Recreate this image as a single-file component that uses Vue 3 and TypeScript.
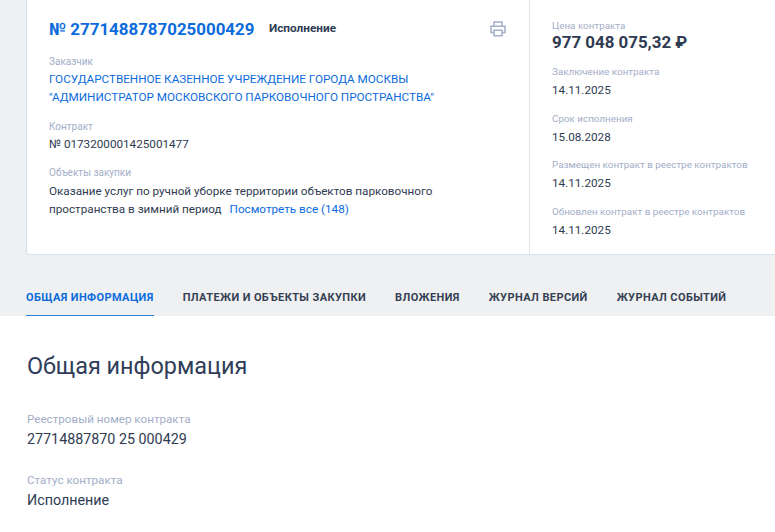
<script setup lang="ts">
const tabs: string[] = ['ОБЩАЯ ИНФОРМАЦИЯ', 'ПЛАТЕЖИ И ОБЪЕКТЫ ЗАКУПКИ', 'ВЛОЖЕНИЯ', 'ЖУРНАЛ ВЕРСИЙ', 'ЖУРНАЛ СОБЫТИЙ']
const sideItems = [
  { label: 'Заключение контракта', value: '14.11.2025' },
  { label: 'Срок исполнения', value: '15.08.2028' },
  { label: 'Размещен контракт в реестре контрактов', value: '14.11.2025' },
  { label: 'Обновлен контракт в реестре контрактов', value: '14.11.2025' },
]
</script>

<template>
  <div class="page">
    <section class="top">
      <div class="card">
        <div class="main">
          <div class="head">
            <a class="number">№ 2771488787025000429</a>
            <span class="status">Исполнение</span>
            <svg class="print" width="16" height="16" viewBox="0 0 16 16" fill="none" stroke="#a3afc9" stroke-width="1.5">
              <path d="M4 5V1h8v4" />
              <path d="M4 11.5H1V5.2h14v6.3h-3" />
              <path d="M4 9.2h8v5.6H4z" />
            </svg>
          </div>
          <div class="label cust">Заказчик</div>
          <a class="link-text">ГОСУДАРСТВЕННОЕ КАЗЕННОЕ УЧРЕЖДЕНИЕ ГОРОДА МОСКВЫ<br />"АДМИНИСТРАТОР МОСКОВСКОГО ПАРКОВОЧНОГО ПРОСТРАНСТВА"</a>
          <div class="label contract">Контракт</div>
          <div class="text contract-val">№ 0173200001425001477</div>
          <div class="label objects">Объекты закупки</div>
          <div class="text objects-val">Оказание услуг по ручной уборке территории объектов парковочного<br />пространства в зимний период <a class="more">Посмотреть все (148)</a></div>
        </div>
        <aside class="side">
          <div class="label">Цена контракта</div>
          <div class="price">977 048 075,32 ₽</div>
          <div v-for="item in sideItems" :key="item.label" class="side-item">
            <div class="label">{{ item.label }}</div>
            <div class="text side-val">{{ item.value }}</div>
          </div>
        </aside>
      </div>
      <nav class="tabs">
        <span v-for="(tab, i) in tabs" :key="tab" class="tab" :class="{ active: i === 0 }">{{ tab }}</span>
      </nav>
    </section>
    <section class="content">
      <h2 class="title">Общая информация</h2>
      <div class="field">
        <div class="f-label">Реестровый номер контракта</div>
        <div class="f-val">27714887870 25 000429</div>
      </div>
      <div class="field">
        <div class="f-label">Статус контракта</div>
        <div class="f-val">Исполнение</div>
      </div>
    </section>
  </div>
</template>

<style scoped>
.page {
  width: 775px;
  height: 532px;
  overflow: hidden;
  background: #fff;
  font-family: Roboto, "Liberation Sans", sans-serif;
  color: #2f3b52;
}
.top {
  background: #eff0f2;
  height: 316px;
  padding-left: 26px;
  box-sizing: border-box;
}
.card {
  display: flex;
  width: 749px;
  height: 255px;
  box-sizing: border-box;
  background: #fff;
  border: 1px solid #d7e3f0;
  border-top: 0;
  border-right: 0;
  border-radius: 0 0 0 3px;
}
.main {
  width: 503px;
  box-sizing: border-box;
  padding: 18px 22px 0 22px;
  border-right: 1px solid #dfe4ec;
}
.head {
  display: flex;
  align-items: center;
  height: 22px;
}
.number {
  font-size: 16.9px;
  font-weight: 700;
  color: #0b6bdc;
  line-height: 22px;
}
.status {
  margin-left: 14.5px;
  margin-bottom: 2px;
  font-size: 11.8px;
  font-weight: 700;
  color: #2f3b52;
}
.print {
  margin-left: auto;
  margin-right: 1px;
}
.label {
  font-size: 10px;
  line-height: 14px;
  color: #a3aec8;
}
.cust {
  margin-top: 15px;
}
.link-text {
  display: block;
  margin-top: 1px;
  font-size: 11.7px;
  line-height: 18px;
  color: #0b6bdc;
}
.contract {
  margin-top: 14px;
}
.text {
  font-size: 11.7px;
  line-height: 18px;
  color: #2f3b52;
}
.contract-val {
  margin-top: 1px;
}
.objects {
  margin-top: 13px;
}
.objects-val {
  margin-top: 2px;
  line-height: 18px;
}
.more {
  margin-left: 5px;
  color: #0b6bdc;
}
.side {
  flex: 1;
  padding: 19px 0 0 22px;
  white-space: nowrap;
}
.side .label {
  font-size: 9.85px;
}
.price {
  font-size: 16.9px;
  font-weight: 700;
  line-height: 18px;
  color: #2f3b52;
}
.side-item {
  margin-top: 14px;
}
.side-item + .side-item {
  margin-top: 12.5px;
}
.side-val {
  margin-top: 2px;
}
.tabs {
  display: flex;
  gap: 29px;
  margin-top: 26px;
  height: 35px;
}
.tab {
  font-size: 11px;
  font-weight: 700;
  letter-spacing: 0.4px;
  line-height: 33px;
  height: 35px;
  box-sizing: border-box;
  color: #343f52;
}
.tab.active {
  color: #0b6bdc;
  border-bottom: 1px solid #2b7fd8;
}
.content {
  padding: 35px 27px 0;
}
.title {
  margin: 0;
  font-size: 23.4px;
  font-weight: 400;
  line-height: 30px;
  color: #2f3d5a;
}
.field {
  margin-top: 31px;
}
.field + .field {
  margin-top: 25.3px;
}
.f-label {
  font-size: 11.65px;
  line-height: 14px;
  color: #a3aec8;
}
.f-val {
  margin-top: 4px;
  font-size: 14.3px;
  line-height: 18px;
  color: #2f3b52;
}
</style>
